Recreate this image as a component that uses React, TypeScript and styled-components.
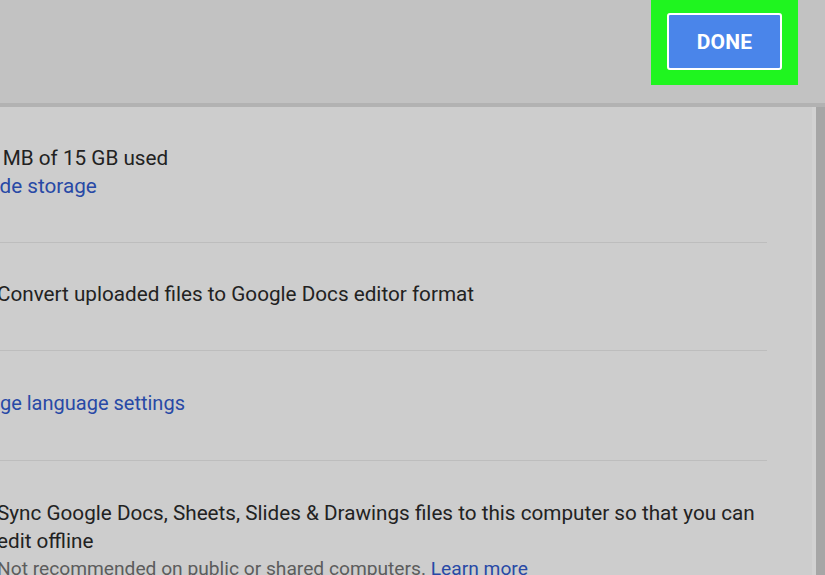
import React from "react";
import styled, { createGlobalStyle } from "styled-components";

const Global = createGlobalStyle`
  html, body { margin: 0; padding: 0; }
  body {
    width: 825px;
    height: 575px;
    overflow: hidden;
    background: #cdcdcd;
    font-family: Roboto, "Liberation Sans", Arial, sans-serif;
  }
  #root { width: 825px; height: 575px; }
`;

const Page = styled.div`
  display: flex;
  flex-direction: column;
  width: 825px;
  height: 575px;
  overflow: hidden;
`;

const Header = styled.header`
  flex: none;
  height: 103px;
  display: flex;
  justify-content: flex-end;
  align-items: flex-start;
  padding-right: 27px;
  background: #c2c2c2;
  border-bottom: 4px solid #b2b2b2;
`;

const Highlight = styled.div`
  width: 147px;
  height: 85px;
  box-sizing: border-box;
  padding: 13px 16px 15px;
  background: #1ff51f;
  display: flex;
`;

const DoneButton = styled.button`
  flex: 1;
  box-sizing: border-box;
  border: 2px solid #ffffff;
  border-radius: 3px;
  background: #4a85ea;
  color: #ffffff;
  font-family: Roboto, "Liberation Sans", Arial, sans-serif;
  font-weight: 700;
  font-size: 21px;
  letter-spacing: 0.2px;
  cursor: pointer;
  padding: 0;
`;

const Body = styled.div`
  flex: 1;
  display: flex;
  min-height: 0;
`;

const Panel = styled.main`
  flex: 1;
  min-width: 0;
  overflow: hidden;
  background: #cdcdcd;
  border-right: 4px solid #d2d2d2;
`;

const Scrollbar = styled.div`
  flex: none;
  width: 9px;
  background: #a6a6a6;
`;

const Settings = styled.div`
  display: flex;
  flex-direction: column;
  margin-left: -55px;
  width: 822px;
`;

const Row = styled.section<{ $top?: number; $bottom?: number; $last?: boolean }>`
  padding: ${(p) => p.$top ?? 37}px 0 ${(p) => (p.$last ? 0 : p.$bottom ?? 42)}px;
  border-bottom: ${(p) => (p.$last ? "none" : "1px solid #bdbdbd")};
  display: flex;
  align-items: flex-start;
  gap: 34px;
`;

const Checkbox = styled.span`
  flex: none;
  width: 18px;
  height: 18px;
  margin-top: 5px;
  box-sizing: border-box;
  border: 2px solid #7a7a7a;
  border-radius: 2px;
`;

const Lines = styled.div`
  display: flex;
  flex-direction: column;
`;

const Text = styled.div<{ $indent?: number }>`
  font-size: 20.7px;
  line-height: 28px;
  color: #222222;
  white-space: nowrap;
  padding-left: ${(p) => p.$indent ?? 0}px;
`;

const Link = styled.a<{ $indent?: number; $size?: number }>`
  font-size: ${(p) => p.$size ?? 20.7}px;
  line-height: 28px;
  color: #2849a6;
  text-decoration: none;
  white-space: nowrap;
  padding-left: ${(p) => p.$indent ?? 0}px;
`;

const Note = styled.div`
  font-size: 19.2px;
  line-height: 28px;
  color: #5c5c5c;
  white-space: nowrap;
`;

const NoteLink = styled.a`
  color: #2849a6;
  text-decoration: none;
`;

export default function App() {
  return (
    <Page>
      <Global />
      <Header>
        <Highlight>
          <DoneButton>DONE</DoneButton>
        </Highlight>
      </Header>
      <Body>
        <Panel>
          <Settings>
            <Row $top={37}>
              <Lines>
                <Text $indent={2}>1,290 MB of 15 GB used</Text>
                <Link href="#">Upgrade storage</Link>
              </Lines>
            </Row>
            <Row>
              <Checkbox />
              <Lines>
                <Text>Convert uploaded files to Google Docs editor format</Text>
              </Lines>
            </Row>
            <Row $top={38} $bottom={43}>
              <Lines>
                <Link href="#" $indent={9} $size={20}>Change language settings</Link>
              </Lines>
            </Row>
            <Row $last $top={38}>
              <Checkbox />
              <Lines>
                <Text>
                  Sync Google Docs, Sheets, Slides &amp; Drawings files to this computer so that you can
                </Text>
                <Text>edit offline</Text>
                <Note>
                  Not recommended on public or shared computers. <NoteLink href="#">Learn more</NoteLink>
                </Note>
              </Lines>
            </Row>
          </Settings>
        </Panel>
        <Scrollbar />
      </Body>
    </Page>
  );
}
